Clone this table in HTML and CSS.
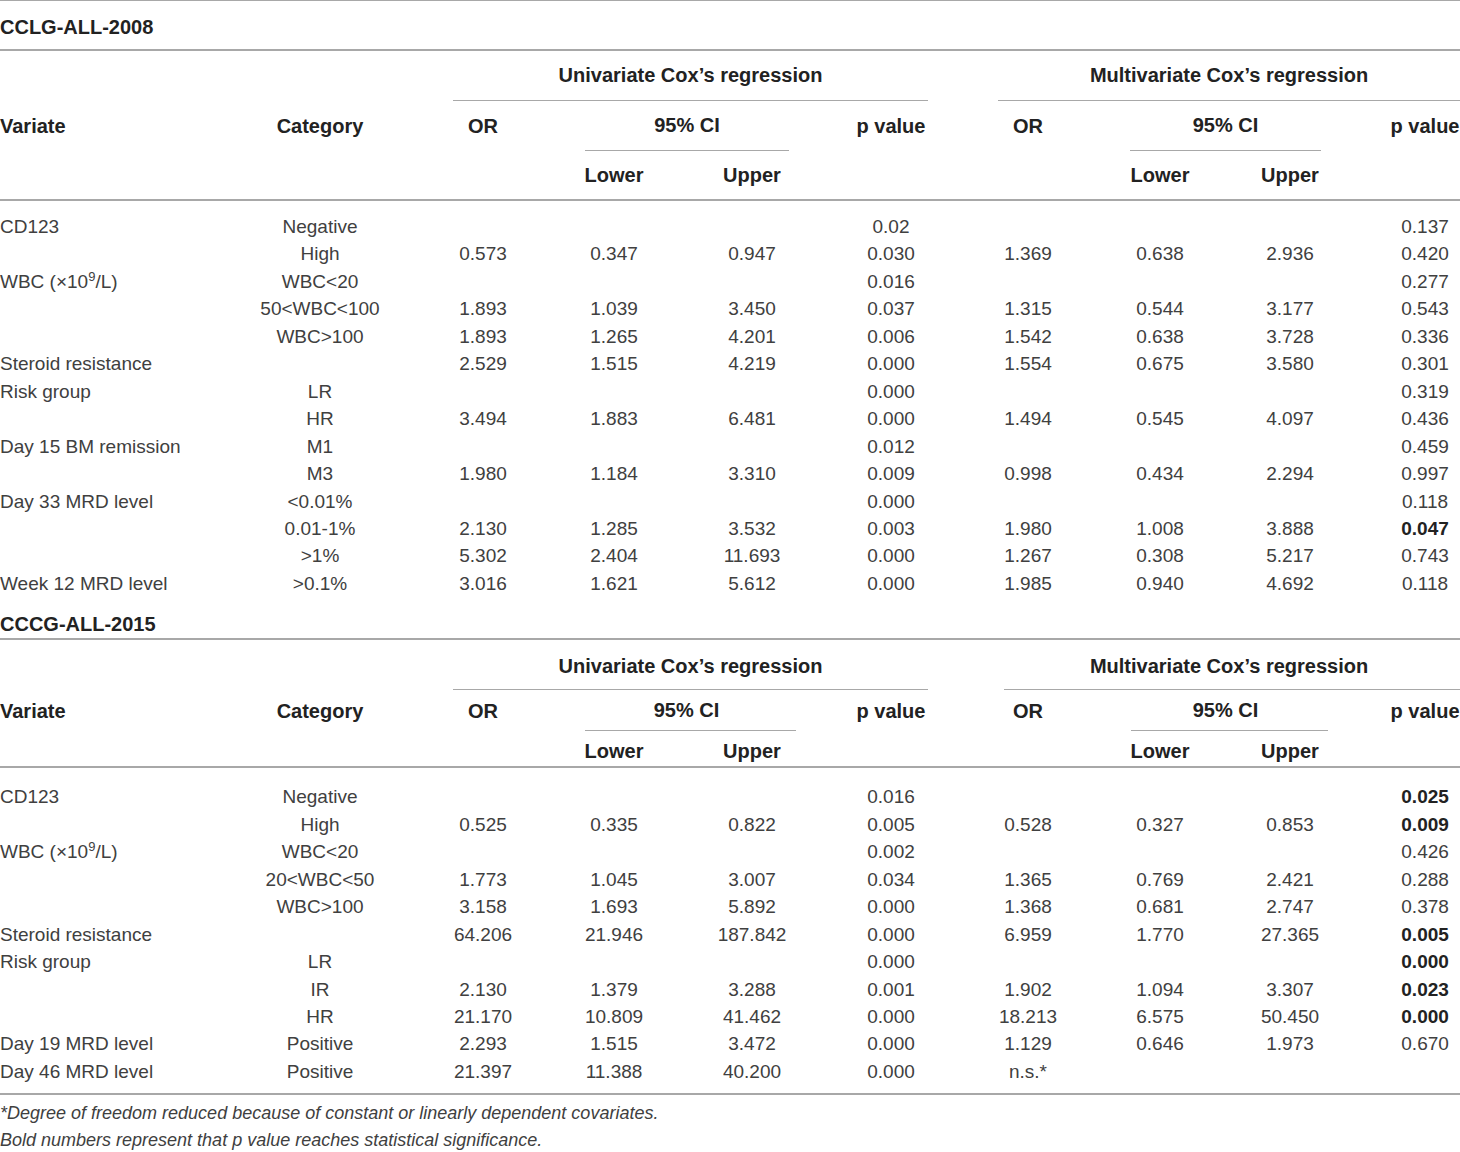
FILE: index.html
```html
<!DOCTYPE html>
<html lang="en">
<head>
<meta charset="utf-8">
<title>Cox regression table</title>
<link rel="stylesheet" href="styles.css">
</head>
<body>
<div class="page">
<table class="t t1">
  <colgroup>
    <col class="c1"><col class="c2"><col class="c3"><col class="c4"><col class="c5"><col class="c6"><col class="c7"><col class="c8"><col class="c9"><col class="c10">
  </colgroup>
  <thead>
    <tr class="title"><th colspan="10">CCLG-ALL-2008</th></tr>
    <tr class="h1"><th></th><th></th><th colspan="4"><div class="span uni">Univariate Cox’s regression</div></th><th colspan="4"><div class="span multi">Multivariate Cox’s regression</div></th></tr>
    <tr class="h2"><th class="l">Variate</th><th>Category</th><th>OR</th><th colspan="2"><div class="span ci">95% CI</div></th><th>p value</th><th>OR</th><th colspan="2"><div class="span mci">95% CI</div></th><th class="pv">p value</th></tr>
    <tr class="h3"><th></th><th></th><th></th><th>Lower</th><th>Upper</th><th></th><th></th><th>Lower</th><th>Upper</th><th></th></tr>
  </thead>
  <tbody>
    <tr class="first"><td class="l">CD123</td><td>Negative</td><td></td><td></td><td></td><td>0.02</td><td></td><td></td><td></td><td class="pv">0.137</td></tr>
    <tr><td class="l"></td><td>High</td><td>0.573</td><td>0.347</td><td>0.947</td><td>0.030</td><td>1.369</td><td>0.638</td><td>2.936</td><td class="pv">0.420</td></tr>
    <tr><td class="l">WBC (×10<sup>9</sup>/L)</td><td>WBC&lt;20</td><td></td><td></td><td></td><td>0.016</td><td></td><td></td><td></td><td class="pv">0.277</td></tr>
    <tr><td class="l"></td><td>50&lt;WBC&lt;100</td><td>1.893</td><td>1.039</td><td>3.450</td><td>0.037</td><td>1.315</td><td>0.544</td><td>3.177</td><td class="pv">0.543</td></tr>
    <tr><td class="l"></td><td>WBC&gt;100</td><td>1.893</td><td>1.265</td><td>4.201</td><td>0.006</td><td>1.542</td><td>0.638</td><td>3.728</td><td class="pv">0.336</td></tr>
    <tr><td class="l">Steroid resistance</td><td></td><td>2.529</td><td>1.515</td><td>4.219</td><td>0.000</td><td>1.554</td><td>0.675</td><td>3.580</td><td class="pv">0.301</td></tr>
    <tr><td class="l">Risk group</td><td>LR</td><td></td><td></td><td></td><td>0.000</td><td></td><td></td><td></td><td class="pv">0.319</td></tr>
    <tr><td class="l"></td><td>HR</td><td>3.494</td><td>1.883</td><td>6.481</td><td>0.000</td><td>1.494</td><td>0.545</td><td>4.097</td><td class="pv">0.436</td></tr>
    <tr><td class="l">Day 15 BM remission</td><td>M1</td><td></td><td></td><td></td><td>0.012</td><td></td><td></td><td></td><td class="pv">0.459</td></tr>
    <tr><td class="l"></td><td>M3</td><td>1.980</td><td>1.184</td><td>3.310</td><td>0.009</td><td>0.998</td><td>0.434</td><td>2.294</td><td class="pv">0.997</td></tr>
    <tr><td class="l">Day 33 MRD level</td><td>&lt;0.01%</td><td></td><td></td><td></td><td>0.000</td><td></td><td></td><td></td><td class="pv">0.118</td></tr>
    <tr><td class="l"></td><td>0.01-1%</td><td>2.130</td><td>1.285</td><td>3.532</td><td>0.003</td><td>1.980</td><td>1.008</td><td>3.888</td><td class="pv"><b>0.047</b></td></tr>
    <tr><td class="l"></td><td>&gt;1%</td><td>5.302</td><td>2.404</td><td>11.693</td><td>0.000</td><td>1.267</td><td>0.308</td><td>5.217</td><td class="pv">0.743</td></tr>
    <tr class="last"><td class="l">Week 12 MRD level</td><td>&gt;0.1%</td><td>3.016</td><td>1.621</td><td>5.612</td><td>0.000</td><td>1.985</td><td>0.940</td><td>4.692</td><td class="pv">0.118</td></tr>
  </tbody>
</table>

<table class="t t2">
  <colgroup>
    <col class="c1"><col class="c2"><col class="c3"><col class="c4"><col class="c5"><col class="c6"><col class="c7"><col class="c8"><col class="c9"><col class="c10">
  </colgroup>
  <thead>
    <tr class="title"><th colspan="10">CCCG-ALL-2015</th></tr>
    <tr class="h1"><th></th><th></th><th colspan="4"><div class="span uni">Univariate Cox’s regression</div></th><th colspan="4"><div class="span multi">Multivariate Cox’s regression</div></th></tr>
    <tr class="h2"><th class="l">Variate</th><th>Category</th><th>OR</th><th colspan="2"><div class="span ci">95% CI</div></th><th>p value</th><th>OR</th><th colspan="2"><div class="span mci">95% CI</div></th><th class="pv">p value</th></tr>
    <tr class="h3"><th></th><th></th><th></th><th>Lower</th><th>Upper</th><th></th><th></th><th>Lower</th><th>Upper</th><th></th></tr>
  </thead>
  <tbody>
    <tr class="first"><td class="l">CD123</td><td>Negative</td><td></td><td></td><td></td><td>0.016</td><td></td><td></td><td></td><td class="pv"><b>0.025</b></td></tr>
    <tr><td class="l"></td><td>High</td><td>0.525</td><td>0.335</td><td>0.822</td><td>0.005</td><td>0.528</td><td>0.327</td><td>0.853</td><td class="pv"><b>0.009</b></td></tr>
    <tr><td class="l">WBC (×10<sup>9</sup>/L)</td><td>WBC&lt;20</td><td></td><td></td><td></td><td>0.002</td><td></td><td></td><td></td><td class="pv">0.426</td></tr>
    <tr><td class="l"></td><td>20&lt;WBC&lt;50</td><td>1.773</td><td>1.045</td><td>3.007</td><td>0.034</td><td>1.365</td><td>0.769</td><td>2.421</td><td class="pv">0.288</td></tr>
    <tr><td class="l"></td><td>WBC&gt;100</td><td>3.158</td><td>1.693</td><td>5.892</td><td>0.000</td><td>1.368</td><td>0.681</td><td>2.747</td><td class="pv">0.378</td></tr>
    <tr><td class="l">Steroid resistance</td><td></td><td>64.206</td><td>21.946</td><td>187.842</td><td>0.000</td><td>6.959</td><td>1.770</td><td>27.365</td><td class="pv"><b>0.005</b></td></tr>
    <tr><td class="l">Risk group</td><td>LR</td><td></td><td></td><td></td><td>0.000</td><td></td><td></td><td></td><td class="pv"><b>0.000</b></td></tr>
    <tr><td class="l"></td><td>IR</td><td>2.130</td><td>1.379</td><td>3.288</td><td>0.001</td><td>1.902</td><td>1.094</td><td>3.307</td><td class="pv"><b>0.023</b></td></tr>
    <tr><td class="l"></td><td>HR</td><td>21.170</td><td>10.809</td><td>41.462</td><td>0.000</td><td>18.213</td><td>6.575</td><td>50.450</td><td class="pv"><b>0.000</b></td></tr>
    <tr><td class="l">Day 19 MRD level</td><td>Positive</td><td>2.293</td><td>1.515</td><td>3.472</td><td>0.000</td><td>1.129</td><td>0.646</td><td>1.973</td><td class="pv">0.670</td></tr>
    <tr class="last"><td class="l">Day 46 MRD level</td><td>Positive</td><td>21.397</td><td>11.388</td><td>40.200</td><td>0.000</td><td>n.s.*</td><td></td><td></td><td class="pv"></td></tr>
  </tbody>
</table>

<div class="notes">
  <p>*Degree of freedom reduced because of constant or linearly dependent covariates.</p>
  <p>Bold numbers represent that p value reaches statistical significance.</p>
</div>
</div>
</body>
</html>
```

FILE: styles.css
```css
html, body {
  margin: 0;
  padding: 0;
  background: #ffffff;
}

body {
  font-family: "Liberation Sans", Arial, sans-serif;
  color: #333333;
}

.page {
  width: 1460px;
}

.t {
  width: 1460px;
  border-collapse: collapse;
  table-layout: fixed;
}

.c1 { width: 240px; }
.c2 { width: 160px; }
.c3 { width: 166px; }
.c4 { width: 96px; }
.c5 { width: 180px; }
.c6 { width: 98px; }
.c7 { width: 176px; }
.c8 { width: 88px; }
.c9 { width: 172px; }
.c10 { width: 84px; }

.t th,
.t td {
  padding: 0;
  text-align: center;
  vertical-align: middle;
  white-space: nowrap;
}

.t th {
  font-size: 20px;
  font-weight: bold;
  color: #222222;
}

.t td {
  font-size: 19px;
  line-height: 27.45px;
  color: #404040;
}

.t td b {
  font-weight: bold;
  color: #222222;
}

.t .l {
  text-align: left;
}

.t .pv {
  padding-left: 14px;
}

.t sup {
  font-size: 13px;
  line-height: 0;
  vertical-align: 7px;
}

.span {
  border-bottom: 1px solid #a8a8a8;
}

/* ---------- Table 1 ---------- */
.t1 {
  border-top: 1px solid #a8a8a8;
}

.t1 .title th {
  text-align: left;
  padding-top: 4px;
  line-height: 44px;
  border-bottom: 2px solid #a8a8a8;
}

.t1 .h1 th,
.t1 .h2 th {
  line-height: 49px;
}

.t1 .h1 .span,
.t1 .h2 .span {
  line-height: 49px;
}

.t1 .h3 th {
  line-height: 48px;
  border-bottom: 2px solid #a8a8a8;
}

.t1 .uni { margin: 0 12px 0 53px; }
.t1 .multi { margin: 0 0 0 58px; }
.t1 .ci { margin: 0 53px 0 19px; }
.t1 .mci { margin: 0 55px 0 14px; }

.t1 .first td {
  padding-top: 12px;
}

/* ---------- Table 2 ---------- */
.t2 .title th {
  text-align: left;
  padding-top: 14px;
  line-height: 27px;
  border-bottom: 2px solid #a8a8a8;
}

.t2 .h1 th {
  line-height: 49px;
}

.t2 .h1 .span {
  padding-top: 4px;
  line-height: 45px;
}

.t2 .h2 th {
  line-height: 40px;
}

.t2 .h2 .span {
  line-height: 40px;
}

.t2 .h3 th {
  padding-top: 5px;
  line-height: 30px;
  border-bottom: 2px solid #a8a8a8;
}

.t2 .uni { margin: 0 12px 0 53px; }
.t2 .multi { margin: 0 0 0 64px; padding-right: 6px; }
.t2 .ci { margin: 0 46px 0 19px; padding-right: 8px; }
.t2 .mci { margin: 0 48px 0 15px; padding-right: 8px; }

.t2 .first td {
  padding-top: 15px;
}

.t2 .last td {
  padding-bottom: 8px;
  border-bottom: 2px solid #a8a8a8;
}

/* ---------- Notes ---------- */
.notes {
  padding-top: 5px;
}

.notes p {
  margin: 0;
  font-size: 18px;
  line-height: 27px;
  font-style: italic;
  color: #404040;
}
```
